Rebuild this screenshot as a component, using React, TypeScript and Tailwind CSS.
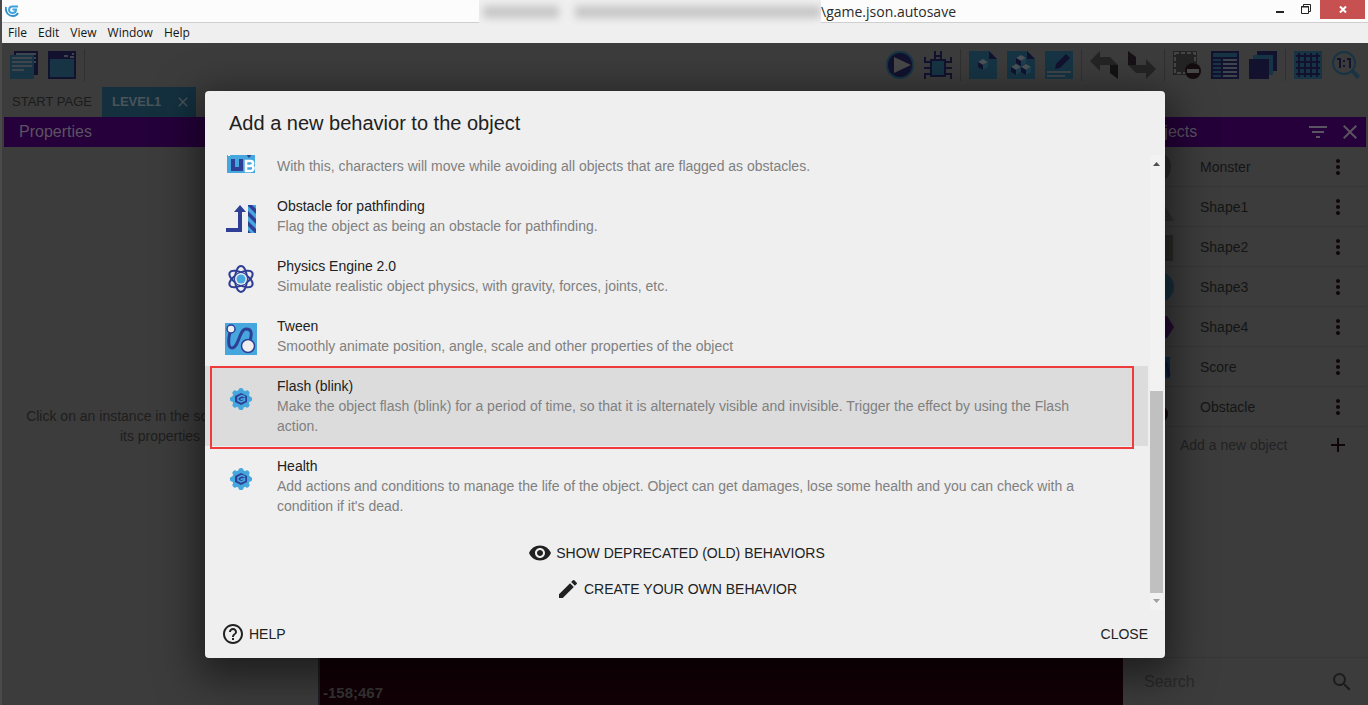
import React from "react";
import {
  MdAdd,
  MdClose,
  MdEdit,
  MdFilterList,
  MdHelpOutline,
  MdMoreVert,
  MdSearch,
  MdVisibility,
} from "react-icons/md";

const NAVY = "#12122f";
const TEAL = "#163444";
const PALE = "#3f454c";

function ToolIcon({ label, children }: { label: string; children: React.ReactNode }) {
  return (
    <button type="button" aria-label={label} className="size-7 shrink-0">
      <svg viewBox="0 0 28 28" className="size-7">
        {children}
      </svg>
    </button>
  );
}

function Group({ children }: { children: React.ReactNode }) {
  return <div className="flex items-center gap-2.5">{children}</div>;
}

function Separator() {
  return <div className="h-8 w-px bg-[#303030]" />;
}

function Cube({ x, y }: { x: number; y: number }) {
  return (
    <g transform={`translate(${x} ${y})`}>
      <path d="M5 0 10 3 5 6 0 3Z" fill="#4b5358" />
      <path d="M0 3 5 6V11L0 8Z" fill={NAVY} />
      <path d="M10 3 5 6V11L10 8Z" fill="#1c3f52" />
    </g>
  );
}

function Toolbar() {
  return (
    <div className="flex h-11 items-center justify-between pr-2 pl-2">
      <div className="flex items-center gap-2">
        <Group>
          <ToolIcon label="Project manager">
            <path d="M4 0H28V24H4Z" fill={NAVY} />
            <path d="M6 3H26M24 7H26M24 11H26" stroke={PALE} strokeWidth="2" />
            <path d="M0 4H24V28H0Z" fill={TEAL} />
            <path d="M2 7H22M2 11H22M2 15H22M2 19H14" stroke={PALE} strokeWidth="2" />
          </ToolIcon>
          <ToolIcon label="Preview window">
            <path d="M0 0H28V28H0Z" fill={NAVY} />
            <path d="M2 8H26V26H2Z" fill={TEAL} />
            <path d="M16 5H20M22 6H26M24 3H26" stroke={PALE} strokeWidth="2" />
          </ToolIcon>
        </Group>
        <Separator />
      </div>
      <div className="flex items-center gap-2">
        <Group>
          <ToolIcon label="Play">
            <circle cx="14" cy="14" r="14" fill={TEAL} />
            <circle cx="14" cy="14" r="12" fill={NAVY} />
            <path d="M8 6 25 14 8 22Z" fill="#484848" />
          </ToolIcon>
          <ToolIcon label="Debug">
            <g fill="none" stroke={NAVY} strokeWidth="2">
              <path d="M7 9H21V25H7Z" fill={TEAL} />
              <path d="M11 0V8M17 0V8M11 5H17M1 6V11H7M27 6V11H21M0 17H7M21 17H28M1 28V23H7M27 28V23H21" />
            </g>
          </ToolIcon>
        </Group>
        <Separator />
        <Group>
          <ToolIcon label="Objects">
            <path d="M0 0H20L28 8V28H0Z" fill={TEAL} />
            <path d="M20 0 28 8H20Z" fill={NAVY} />
            <Cube x={9} y={8} />
          </ToolIcon>
          <ToolIcon label="Object groups">
            <path d="M0 0H20L28 8V28H0Z" fill={TEAL} />
            <path d="M20 0 28 8H20Z" fill={NAVY} />
            <Cube x={9} y={4} />
            <Cube x={4} y={13} />
            <Cube x={14} y={13} />
          </ToolIcon>
          <ToolIcon label="Edit scene">
            <path d="M0 0H28V28H0Z" fill={TEAL} />
            <path d="M10 18 11 13 21 3 25 7 15 17Z" fill={NAVY} />
            <path d="M2 21H26M2 25H20" stroke={PALE} strokeWidth="2" />
          </ToolIcon>
        </Group>
        <Separator />
        <Group>
          <ToolIcon label="Undo">
            <path d="M0 10 10 0V6H20L28 14H10V20Z" fill="#242424" />
            <path d="M20 14H28V28L20 22Z" fill="#131313" />
          </ToolIcon>
          <ToolIcon label="Redo">
            <path d="M28 18 18 28V22H8L0 14H18V8Z" fill="#242424" />
            <path d="M8 14H0V0L8 6Z" fill="#171014" />
          </ToolIcon>
        </Group>
        <Separator />
        <Group>
          <ToolIcon label="Delete selection">
            <path d="M0 0H24V24H0Z" fill="#242424" />
            <path d="M2 2H22V22H2Z" fill="none" stroke="#454545" strokeWidth="2" strokeDasharray="4 2" />
            <circle cx="20" cy="20" r="8" fill="#150c10" />
            <path d="M14 18H26V22H14Z" fill="#484848" />
          </ToolIcon>
          <ToolIcon label="Instances list">
            <path d="M0 0H28V28H0Z" fill={NAVY} />
            <path d="M2 4H26" stroke={TEAL} strokeWidth="4" />
            <path d="M2 9H10M2 13H10M2 17H10M2 21H10M2 25H10" stroke={TEAL} strokeWidth="2" />
            <path d="M12 9H26M12 13H26M12 17H26M12 21H26M12 25H26" stroke={PALE} strokeWidth="2" />
          </ToolIcon>
          <ToolIcon label="Layers">
            <path d="M8 0H28V20H8Z" fill={NAVY} />
            <path d="M4 4H24V24H4Z" fill={TEAL} />
            <path d="M0 8H20V28H0Z" fill={NAVY} />
          </ToolIcon>
        </Group>
        <Separator />
        <Group>
          <ToolIcon label="Toggle grid">
            <path d="M0 0H28V28H0Z" fill={TEAL} />
            <path d="M5 2V26M11 2V26M17 2V26M23 2V26M2 5H26M2 11H26M2 17H26M2 23H26" stroke={NAVY} strokeWidth="2" />
          </ToolIcon>
          <ToolIcon label="Zoom to original size">
            <path d="M18 20 21 18 28 25 25 28Z" fill={TEAL} />
            <circle cx="12" cy="12" r="11" fill="#3c3c3c" stroke={TEAL} strokeWidth="2" />
            <path d="M5 8H8V17M15 8H18V17" fill="none" stroke={NAVY} strokeWidth="2" />
            <path d="M11 9H13V11H11ZM11 14H13V16H11Z" fill={NAVY} />
          </ToolIcon>
        </Group>
      </div>
    </div>
  );
}

const thumbs: Record<string, React.ReactNode> = {
  Monster: <ellipse cx="18" cy="17" rx="12" ry="14" fill="#2a2b2a" />,
  Shape1: <path d="M17 4 33 31H1Z" fill="#2f2f2f" />,
  Shape2: <path d="M2 5H32V31H2Z" fill="#2a2a28" />,
  Shape3: <circle cx="18" cy="17" r="15" fill="#19303e" />,
  Shape4: <path d="M9 6H26L33 17 26 28H9L2 17Z" fill="#240a33" />,
  Score: (
    <>
      <path d="M8 7H29V28H8Z" fill="#10283d" />
      <path d="M25 12 28 26M25 20H28" stroke="#0b1838" strokeWidth="3" />
    </>
  ),
  Obstacle: <circle cx="18" cy="24" r="9" fill="#16060d" />,
};

function ObjectsPanel() {
  return (
    <aside className="flex w-[245px] shrink-0 flex-col">
      <div className="mr-0.5 flex h-[30px] items-center bg-[#25003a] pr-1 pl-5 text-[#5b5361]">
        <h2 className="flex-1 text-base">Objects</h2>
        <button type="button" aria-label="Filter objects" className="mr-2">
          <MdFilterList className="size-6" />
        </button>
        <button type="button" aria-label="Close objects panel">
          <MdClose className="size-6" />
        </button>
      </div>
      <ul>
        {Object.keys(thumbs).map((name) => (
          <li key={name} className="mr-0.5 flex h-10 items-center border-b border-[#363636] pr-4 pl-[18px]">
            <svg viewBox="0 0 34 34" className="size-[34px] shrink-0">
              {thumbs[name]}
            </svg>
            <span className="ml-[25px] flex-1 text-sm text-[#151515]">{name}</span>
            <button type="button" aria-label={`Options for ${name}`} className="text-[#10060a]">
              <MdMoreVert className="size-6" />
            </button>
          </li>
        ))}
      </ul>
      <button type="button" className="mr-0.5 flex h-9 items-center justify-between pr-4 pl-[57px] text-sm text-[#222]">
        Add a new object
        <MdAdd className="size-6 text-[#10060a]" />
      </button>
      <label className="mt-auto flex h-12 items-center border-t border-[#363636] pr-3.5 pl-[21px] text-[#1c1c1c]">
        <input
          type="search"
          aria-label="Search objects"
          placeholder="Search"
          className="w-0 flex-1 bg-transparent text-base outline-none placeholder:text-[#292929]"
        />
        <MdSearch className="size-6" />
      </label>
    </aside>
  );
}

function PathfindingIcon() {
  return (
    <svg viewBox="0 0 32 32" className="size-8">
      <path d="M2 2H30V30H2Z" fill="#45a7dd" />
      <path d="M6 16H10V24H14V16H18V28H6Z" fill="#2f3f96" />
      <path d="M4 10V13M8 10V12M12 10V12" stroke="#fff" strokeWidth="2" />
      <path d="M20 10H28L24 15Z" fill="#2f3f96" />
      <path d="M21 18H25.5C29 18 28.500 22 26.500 22.500 29.500 23.500 29 28 25.500 28H21ZM21 23H26" fill="none" stroke="#fff" strokeWidth="2.600" />
    </svg>
  );
}

function ObstacleIcon() {
  return (
    <svg viewBox="0 0 32 32" className="size-8">
      <path d="M1 25H13V9H9L15 2 21 9H17V29H1Z" fill="#2f3f96" />
      <path d="M23 2H31V30H23Z" fill="#45a7dd" />
      <path d="M23 2H27L31 6V11L23 3ZM23 8 31 16V21L23 13ZM23 18 31 26V30H30L23 23ZM23 27 26 30H23Z" fill="#2f3f96" />
    </svg>
  );
}

function PhysicsIcon() {
  return (
    <svg viewBox="0 0 32 32" className="size-8">
      <g fill="none" stroke="#2f3f96" strokeWidth="2">
        <ellipse cx="16" cy="16" rx="6" ry="13" />
        <ellipse cx="16" cy="16" rx="6" ry="13" transform="rotate(60 16 16)" />
        <ellipse cx="16" cy="16" rx="6" ry="13" transform="rotate(120 16 16)" />
      </g>
      <circle cx="16" cy="16" r="6" fill="#efefef" />
      <circle cx="16" cy="16" r="4.500" fill="#45a7dd" />
    </svg>
  );
}

function TweenIcon() {
  return (
    <svg viewBox="0 0 32 32" className="size-8">
      <path d="M0 0H32V32H0Z" fill="#45a7dd" />
      <path d="M5 9C3 17 3 25 7 25 14 25 14 6 21 6 29 6 26 14 24 22" fill="none" stroke="#2f3f96" strokeWidth="3" />
      <circle cx="6" cy="6" r="4" fill="#efefef" stroke="#2f3f96" strokeWidth="1.500" />
      <circle cx="23" cy="23" r="6.500" fill="#efefef" stroke="#2f3f96" strokeWidth="1.500" />
    </svg>
  );
}

const lobes = [0, 45, 90, 135, 180, 225, 270, 315];

function ExtensionIcon() {
  return (
    <svg viewBox="0 0 32 32" className="size-8">
      <g fill="#45a7dd">
        <circle cx="16" cy="16" r="9" />
        {lobes.map((angle) => (
          <circle key={angle} cx="16" cy="7.500" r="2.600" transform={`rotate(${angle} 16 16)`} />
        ))}
      </g>
      <path d="M16 10 22 13V19L16 22 10 19V13Z" fill="#2f3f96" />
      <path d="M20 13.500 16.500 12.500 13 14.500V17.500L16 19 19.500 17.500V15.500L15.500 16.500" fill="none" stroke="#45a7dd" strokeWidth="1.500" />
    </svg>
  );
}

type Behavior = {
  id: string;
  title?: string;
  text: string;
  icon: React.ReactNode;
  selected?: boolean;
};

const behaviors: Behavior[] = [
  {
    id: "pathfinding",
    text: "With this, characters will move while avoiding all objects that are flagged as obstacles.",
    icon: <PathfindingIcon />,
  },
  {
    id: "obstacle",
    title: "Obstacle for pathfinding",
    text: "Flag the object as being an obstacle for pathfinding.",
    icon: <ObstacleIcon />,
  },
  {
    id: "physics",
    title: "Physics Engine 2.0",
    text: "Simulate realistic object physics, with gravity, forces, joints, etc.",
    icon: <PhysicsIcon />,
  },
  {
    id: "tween",
    title: "Tween",
    text: "Smoothly animate position, angle, scale and other properties of the object",
    icon: <TweenIcon />,
  },
  {
    id: "flash",
    title: "Flash (blink)",
    text: "Make the object flash (blink) for a period of time, so that it is alternately visible and invisible. Trigger the effect by using the Flash action.",
    icon: <ExtensionIcon />,
    selected: true,
  },
  {
    id: "health",
    title: "Health",
    text: "Add actions and conditions to manage the life of the object. Object can get damages, lose some health and you can check with a condition if it's dead.",
    icon: <ExtensionIcon />,
  },
];

function BehaviorRow({ title, text, icon, selected }: Behavior) {
  return (
    <li className={selected ? "relative bg-[#dcdcdc]" : "relative"}>
      <button type="button" className="flex w-full items-start py-2.5 pr-12 pl-5 text-left text-sm leading-5">
        <span className="mt-[7px] mr-5 shrink-0">{icon}</span>
        <span className="flex-1">
          <span className="block min-h-5 text-[#212121]">{title}</span>
          <span className="block text-[#808080]">{text}</span>
        </span>
      </button>
      {selected && (
        <div className="pointer-events-none absolute top-0 right-3.5 -bottom-[3px] left-[5px] z-10 border-2 border-[#ee3b3b]" />
      )}
    </li>
  );
}

function BehaviorDialog() {
  return (
    <div className="absolute inset-0 z-20 flex items-start justify-center pt-12">
      <section
        role="dialog"
        aria-labelledby="dialog-title"
        className="w-full max-w-[960px] rounded bg-[#efefef] text-[#212121] shadow-[0_12px_40px_8px_rgba(0,0,0,0.5)]"
      >
        <h1 id="dialog-title" className="flex h-16 items-center px-6 text-xl">
          Add a new behavior to the object
        </h1>
        <div className="flex h-[455px]">
          <div className="flex h-full flex-1 flex-col justify-end overflow-hidden">
            <ul>
              {behaviors.map((b) => (
                <BehaviorRow key={b.id} {...b} />
              ))}
            </ul>
            <div className="flex flex-col items-center pt-[9px] pb-[3px] text-sm">
              <button type="button" className="flex h-9 items-center gap-1">
                <MdVisibility className="size-6" />
                SHOW DEPRECATED (OLD) BEHAVIORS
              </button>
              <button type="button" className="flex h-9 items-center gap-1">
                <MdEdit className="size-6" />
                CREATE YOUR OWN BEHAVIOR
              </button>
            </div>
          </div>
          <div aria-hidden="true" className="mr-0.5 ml-0.5 flex w-[13px] flex-col items-center bg-[#f2f2f2]">
            <svg viewBox="0 0 13 18" className="h-[18px] w-[13px] shrink-0">
              <path d="M3 11 6.500 7 10 11Z" fill="#505050" />
            </svg>
            <div className="flex w-full flex-1 flex-col justify-end">
              <div className="h-[202px] bg-[#c0c0c0]" />
            </div>
            <svg viewBox="0 0 13 17" className="h-[17px] w-[13px] shrink-0">
              <path d="M3 6 6.500 10 10 6Z" fill="#a0a0a0" />
            </svg>
          </div>
        </div>
        <div className="flex h-12 items-center justify-between pr-[17px] pl-4 text-sm">
          <button type="button" className="flex h-9 items-center gap-1">
            <MdHelpOutline className="size-6" />
            HELP
          </button>
          <button type="button" className="h-9">
            CLOSE
          </button>
        </div>
      </section>
    </div>
  );
}

function TitleBar() {
  return (
    <header className="relative flex h-[23px] items-center border-b border-[#cfcfcf] bg-[#fcfcfc]">
      <svg viewBox="0 0 14 12" className="ml-[3px] h-3 w-3.5" fill="none">
        <path d="M1 2C0 8 4 11 8 11 10 11 12 10 13 8" stroke="#2f8fcb" strokeWidth="1.800" />
        <path d="M13 1.500H7.500C3 1.500 3 8 7 8 10 8 11 6.500 11 4.500H7.500" stroke="#3aa3de" strokeWidth="2" />
      </svg>
      <div className="flex flex-1 items-center justify-center pl-[148px]">
        <div className="relative h-[22px] w-[342px]">
          <div className="absolute inset-x-0 top-0 h-[26px] overflow-hidden bg-[#f0f0f0]">
            <div className="absolute top-1.5 left-1 h-3 w-[76px] bg-[#c4c4c4] blur-[4px]" />
            <div className="absolute top-1.5 right-0 left-24 h-3 bg-[#c4c4c4] blur-[4px]" />
          </div>
        </div>
        <span className="pt-0.5 text-sm text-[#2a2a2a]">\game.json.autosave</span>
      </div>
      <div className="flex h-full items-start">
        <button type="button" aria-label="Minimize" className="h-5 w-[26px]">
          <svg viewBox="0 0 26 20" className="h-5 w-[26px]">
            <path d="M8 11H16V13H8Z" fill="#222" />
          </svg>
        </button>
        <button type="button" aria-label="Restore" className="h-5 w-[26px]">
          <svg viewBox="0 0 26 20" className="h-5 w-[26px]" fill="none" stroke="#222">
            <path d="M7.500 6.500H14.500V13.500H7.500ZM7 7H15M9.500 6V4.500H16.500V11.500H15" />
          </svg>
        </button>
        <button type="button" aria-label="Close window" className="mr-[3px] h-[19px] w-[45px] bg-[#c75050]">
          <svg viewBox="0 0 45 19" className="h-[19px] w-[45px]">
            <path d="M20 6.500 26 12.500M26 6.500 20 12.500" stroke="#fff" strokeWidth="2" />
          </svg>
        </button>
      </div>
    </header>
  );
}

export default function App() {
  return (
    <div className="flex min-h-screen flex-col border-l-2 border-[#4a4a4a] bg-[#3c3c3c] font-['Liberation_Sans',Arial,sans-serif]">
      <div className="font-['Open_Sans',sans-serif]">
        <TitleBar />
        <nav className="flex h-5 items-center gap-[11px] bg-[#efefef] pl-1.5 text-xs text-[#151515]">
          {["File", "Edit", "View", "Window", "Help"].map((item) => (
            <button key={item} type="button">
              {item}
            </button>
          ))}
        </nav>
      </div>
      <main className="relative flex flex-1 flex-col">
        <Toolbar />
        <div className="flex h-[30px] text-[13px]">
          <button type="button" className="w-[100px] text-center text-[#1b1b1b]">
            START PAGE
          </button>
          <div className="flex w-[94px] items-center justify-between bg-[#14303f] pr-[5px] pl-2.5 text-[#4a5459]">
            <button type="button" className="font-bold">
              LEVEL1
            </button>
            <button type="button" aria-label="Close LEVEL1">
              <MdClose className="size-4" />
            </button>
          </div>
        </div>
        <div className="flex flex-1">
          <aside className="flex w-[316px] shrink-0 flex-col">
            <h2 className="ml-0.5 flex h-[30px] items-center bg-[#25003a] pl-[15px] text-base text-[#5b5361]">
              Properties
            </h2>
            <p className="flex flex-1 items-center justify-center px-4 text-center text-sm leading-5 text-[#1e1e1e]">
              Click on an instance in the scene to display its properties
            </p>
          </aside>
          <div className="flex flex-1 items-end border-l-2 border-[#1c2024] bg-[#120006] pb-0.5 pl-[3px] text-[15px] leading-5 font-bold text-[#363636]">
            -158;467
          </div>
          <ObjectsPanel />
        </div>
        <BehaviorDialog />
      </main>
    </div>
  );
}
